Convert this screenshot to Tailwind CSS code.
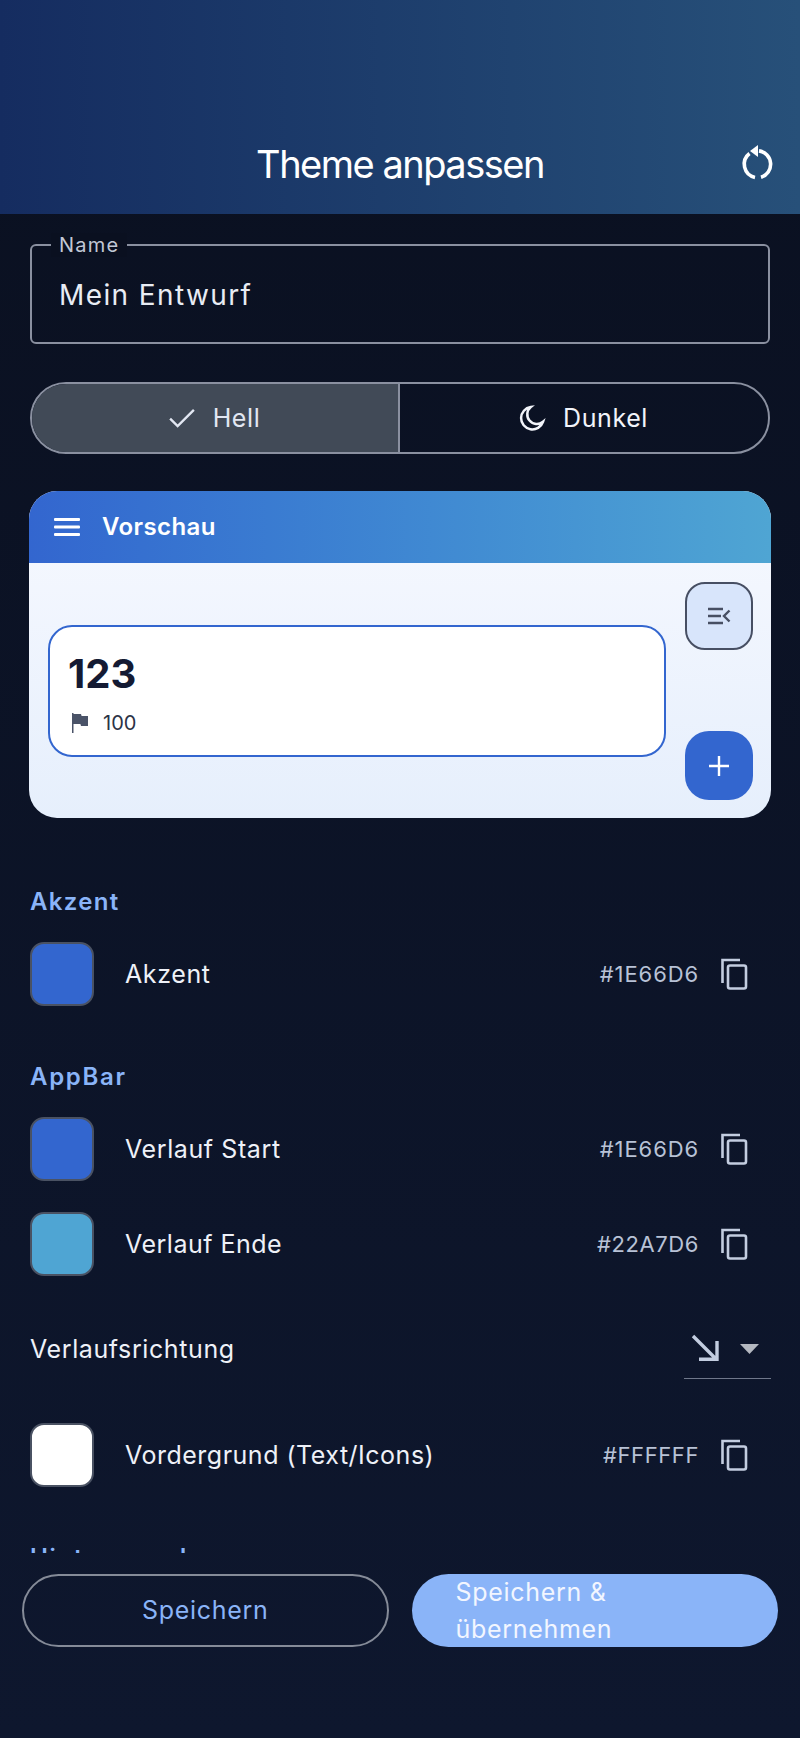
<!DOCTYPE html>
<html lang="de">
<head>
  <meta charset="utf-8"/>
  <meta name="viewport" content="width=device-width, initial-scale=1.0"/>
  <title>Theme anpassen</title>
  <script src="https://cdn.jsdelivr.net/npm/@tailwindcss/browser@4"></script>
</head>
<body class="bg-[#0a1020]">
  <div class="w-[800px] h-[1738px] overflow-hidden flex flex-col font-['Inter',sans-serif] bg-linear-to-b from-[#0a1020] to-[#0e172e] text-white">

    <!-- App bar -->
    <header class="h-[214px] shrink-0 bg-linear-to-r from-[#152c60] to-[#275079] grid grid-cols-[1fr_auto_1fr] items-center pt-[114px]">
      <div></div>
      <h1 class="text-[38px] leading-[44px] tracking-[-1.5px]">Theme anpassen</h1>
      <div class="flex justify-end pr-[23px]">
        <svg class="w-[40px] h-[40px]" viewBox="0 0 40 40" fill="none" stroke="#fff" stroke-width="3.6">
          <path d="M12.5 9.5A13.5 13.5 0 0 0 18 33.4"/>
          <path d="M22 6.9A13.5 13.5 0 0 1 24 33.2"/>
          <path d="M13 7L21 1V13Z" fill="#fff" stroke="none"/>
        </svg>
      </div>
    </header>

    <!-- Scrollable form -->
    <main class="h-[1339px] shrink-0 overflow-hidden px-[30px]">
      <!-- Name field -->
      <div class="relative mt-[30px] h-[100px] border-2 border-[#8a90a0] rounded-[6px] pl-[27px] pt-[31px]">
        <span class="absolute -top-[13px] left-[19px] bg-[#0a1020] px-[8px] text-[20px] leading-[24px] tracking-[1.2px] text-[#c2c8d6]">Name</span>
        <span class="block text-[28px] leading-[36px] tracking-[1.4px] text-[#e8ecf4]">Mein Entwurf</span>
      </div>

      <!-- Brightness toggle -->
      <div class="mt-[38px] h-[72px] grid grid-cols-2 border-2 border-[#8a90a0] rounded-full overflow-hidden">
        <div class="bg-[#414a57] border-r-2 border-[#8a90a0] flex items-center justify-center gap-[16px] text-[#e2e7f2] pr-[3px]">
          <svg class="w-[30px] h-[30px]" viewBox="0 0 24 24" fill="none" stroke="currentColor" stroke-width="1.9"><path d="M2.500 12.500l6 6L21.500 5.500"/></svg>
          <span class="text-[25px] leading-[32px] tracking-[0.6px]">Hell</span>
        </div>
        <div class="flex items-center justify-center gap-[16px] text-[#f2f4fa] pr-[3px]">
          <svg class="w-[30px] h-[30px]" viewBox="0 0 24 24" fill="none" stroke="currentColor" stroke-width="2"><path d="M11 3.200A9 9 0 1 0 20.800 15 7.500 7.500 0 0 1 11 3.200Z"/></svg>
          <span class="text-[25px] leading-[32px] tracking-[0.6px]">Dunkel</span>
        </div>
      </div>

      <!-- Preview -->
      <section class="mt-[37px] h-[327px] rounded-[28px] overflow-hidden bg-linear-to-b from-[#f7f9ff] to-[#e6effc] mx-[-1px]">
        <div class="h-[72px] bg-linear-to-r from-[#3366cf] to-[#4fa5d3] flex items-center pl-[25px] gap-[22px]">
          <svg class="w-[26px] h-[18px]" viewBox="0 0 26 18" fill="#fff"><rect y="0" width="26" height="3" rx="1"/><rect y="7.5" width="26" height="3" rx="1"/><rect y="15" width="26" height="3" rx="1"/></svg>
          <span class="text-[24px] leading-[30px] font-semibold tracking-[0.4px]">Vorschau</span>
        </div>
        <div class="flex pl-[19px] pr-[18px] pt-[19px] gap-[19px]">
          <div class="flex-1 h-[132px] mt-[43px] bg-white border-2 border-[#3366cf] rounded-[24px] pl-[18px] text-[#141a33]">
            <div class="text-[40px] leading-[48px] font-bold mt-[23px]">123</div>
            <div class="flex items-center gap-[14px] mt-[13px]">
              <svg class="w-[18px] h-[20px] ml-[3px]" viewBox="0 0 18 20" fill="#4a5368"><path d="M1 0h1.500v20H1zM2.500 1H10l.6 2H17v10H10l-.6-2H2.500z"/></svg>
              <span class="text-[20px] leading-[24px] text-[#2c3346]">100</span>
            </div>
          </div>
          <div class="w-[68px] flex flex-col gap-[81px]">
            <div class="h-[68px] rounded-[20px] bg-[#d8e5fb] border-2 border-[#474f63] flex items-center justify-center">
              <svg class="w-[24px] h-[18px]" viewBox="0 0 24 18" fill="none" stroke="#474f63" stroke-width="2.4"><path d="M1 2h15M1 9h13M1 16h15M22.500 3.500L17 9l5.500 5.500"/></svg>
            </div>
            <div class="h-[69px] rounded-[24px] bg-[#3366cf] flex items-center justify-center">
              <svg class="w-[20px] h-[20px]" viewBox="0 0 20 20" fill="none" stroke="#fff" stroke-width="2.4"><path d="M10 0v20M0 10h20"/></svg>
            </div>
          </div>
        </div>
      </section>

      <!-- Akzent -->
      <h2 class="mt-[69px] text-[24px] leading-[30px] font-semibold tracking-[1.3px] text-[#8ab4f8]">Akzent</h2>
      <div class="mt-[25px] flex items-center h-[64px]">
        <div class="w-[64px] h-[64px] rounded-[14px] bg-[#3366cf] border-2 border-[#4a5263]"></div>
        <span class="ml-[31px] flex-1 text-[25px] leading-[32px] tracking-[0.6px] text-[#eef1f8]">Akzent</span>
        <span class="text-[22px] leading-[28px] tracking-[0.9px] text-[#b8c2d6]">#1E66D6</span>
        <svg class="ml-[21px] mr-[22px] w-[28px] h-[32px]" viewBox="0 0 28 32" fill="none" stroke="#c3cde0" stroke-width="2.6"><path d="M20 2H2.500v23"/><rect x="8" y="7.500" width="18" height="23" rx="2"/></svg>
      </div>

      <!-- AppBar -->
      <h2 class="mt-[56px] text-[24px] leading-[30px] font-semibold tracking-[1.7px] text-[#8ab4f8]">AppBar</h2>
      <div class="mt-[25px] flex items-center h-[64px]">
        <div class="w-[64px] h-[64px] rounded-[14px] bg-[#3366cf] border-2 border-[#4a5263]"></div>
        <span class="ml-[31px] flex-1 text-[25px] leading-[32px] tracking-[0.6px] text-[#eef1f8]">Verlauf Start</span>
        <span class="text-[22px] leading-[28px] tracking-[0.9px] text-[#b8c2d6]">#1E66D6</span>
        <svg class="ml-[21px] mr-[22px] w-[28px] h-[32px]" viewBox="0 0 28 32" fill="none" stroke="#c3cde0" stroke-width="2.6"><path d="M20 2H2.500v23"/><rect x="8" y="7.500" width="18" height="23" rx="2"/></svg>
      </div>
      <div class="mt-[31px] flex items-center h-[64px]">
        <div class="w-[64px] h-[64px] rounded-[14px] bg-[#4fa5d3] border-2 border-[#4a5263]"></div>
        <span class="ml-[31px] flex-1 text-[25px] leading-[32px] tracking-[0.5px] text-[#eef1f8]">Verlauf Ende</span>
        <span class="text-[22px] leading-[28px] tracking-[0.6px] text-[#b8c2d6]">#22A7D6</span>
        <svg class="ml-[21px] mr-[22px] w-[28px] h-[32px]" viewBox="0 0 28 32" fill="none" stroke="#c3cde0" stroke-width="2.6"><path d="M20 2H2.500v23"/><rect x="8" y="7.500" width="18" height="23" rx="2"/></svg>
      </div>

      <!-- Gradient direction -->
      <div class="mt-[43px] flex items-start h-[60px]">
        <span class="flex-1 mt-[14px] text-[25px] leading-[32px] tracking-[0.6px] text-[#eef1f8]">Verlaufsrichtung</span>
        <div class="w-[87px] h-[60px] border-b border-[#6f778a] flex pl-[7px] pt-[15px] gap-[21px] -mr-[1px]">
          <svg class="w-[28px] h-[28px]" viewBox="0 0 28 28" fill="none" stroke="#c3cde0" stroke-width="3.4"><path d="M2 2l23 23M26 7v18.300H8"/></svg>
          <svg class="w-[19px] h-[10px] mt-[10px]" viewBox="0 0 19 10" fill="#b4b8c0"><path d="M0 0h19l-9.500 10z"/></svg>
        </div>
      </div>

      <div class="mt-[44px] flex items-center h-[64px]">
        <div class="w-[64px] h-[64px] rounded-[14px] bg-white border-2 border-[#4a5263]"></div>
        <span class="ml-[31px] flex-1 text-[25px] leading-[32px] tracking-[0.5px] text-[#eef1f8]">Vordergrund (Text/Icons)</span>
        <span class="text-[22px] leading-[28px] tracking-[0.6px] text-[#b8c2d6]">#FFFFFF</span>
        <svg class="ml-[21px] mr-[22px] w-[28px] h-[32px]" viewBox="0 0 28 32" fill="none" stroke="#c3cde0" stroke-width="2.6"><path d="M20 2H2.500v23"/><rect x="8" y="7.500" width="18" height="23" rx="2"/></svg>
      </div>

      <h2 class="mt-[56px] text-[24px] leading-[30px] font-semibold tracking-[1.7px] text-[#8ab4f8]">Hintergrund</h2>
    </main>

    <!-- Bottom actions -->
    <footer class="mt-[21px] px-[22px] grid grid-cols-2 gap-[23px]">
      <button class="h-[73px] rounded-full border-2 border-[#858b98] text-[#8ab4f8] text-[25px] tracking-[0.7px]">Speichern</button>
      <button class="h-[73px] rounded-full bg-[#8ab4f8] pl-[44px] pr-[100px] text-left text-[#f2f6ff] text-[25px] leading-[37px] tracking-[0.7px]">Speichern &amp; übernehmen</button>
    </footer>
  </div>
</body>
</html>
